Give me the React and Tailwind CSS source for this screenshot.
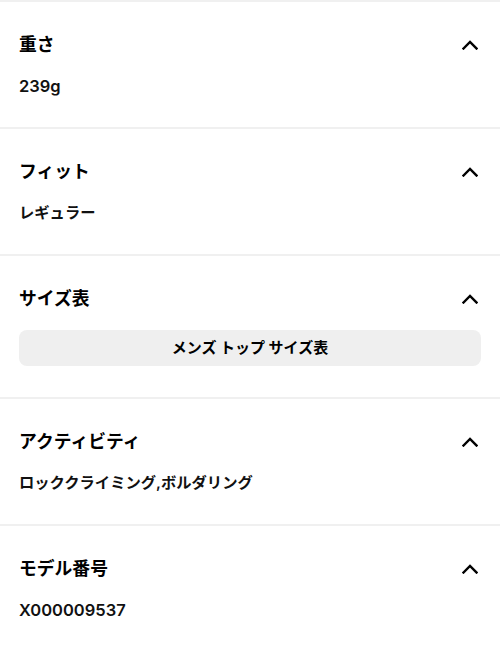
import React from 'react';

const font = { fontFamily: 'Inter, "Noto Sans CJK JP", "Noto Sans", sans-serif' };

function Chevron() {
  return (
    <svg width="16" height="10" viewBox="0 0 16 10" fill="none">
      <path d="M1.5 8.5L8 2l6.5 6.5" stroke="#000" strokeWidth="2.4" strokeLinecap="square" />
    </svg>
  );
}

function Section({ title, children }) {
  return (
    <div className="border-t-2 border-[#f0f0f0] px-[19px] pt-[31px] pb-[31px]">
      <div className="flex items-center justify-between h-[24px]">
        <h3 className="text-[17.8px] font-bold text-black leading-[24px]">{title}</h3>
        <div className="pr-[3px]"><Chevron /></div>
      </div>
      <div className="mt-[19px]">{children}</div>
    </div>
  );
}

function Value({ children, latin }) {
  return (
    <p className={`${latin ? 'text-[16.5px] font-semibold' : 'text-[15.3px] font-semibold'} text-[#111] leading-[20px]`}>
      {children}
    </p>
  );
}

export default function App() {
  return (
    <div className="w-[500px] h-[646px] bg-white overflow-hidden" style={font}>
      <Section title="重さ">
        <Value latin>239g</Value>
      </Section>
      <Section title="フィット">
        <Value>レギュラー</Value>
      </Section>
      <Section title="サイズ表">
        <button className="w-full h-[36px] rounded-[8px] bg-[#efefef] text-[15px] font-bold text-black">
          メンズ トップ サイズ表
        </button>
      </Section>
      <Section title="アクティビティ">
        <Value>ロッククライミング,ボルダリング</Value>
      </Section>
      <Section title="モデル番号">
        <Value latin>X000009537</Value>
      </Section>
    </div>
  );
}
